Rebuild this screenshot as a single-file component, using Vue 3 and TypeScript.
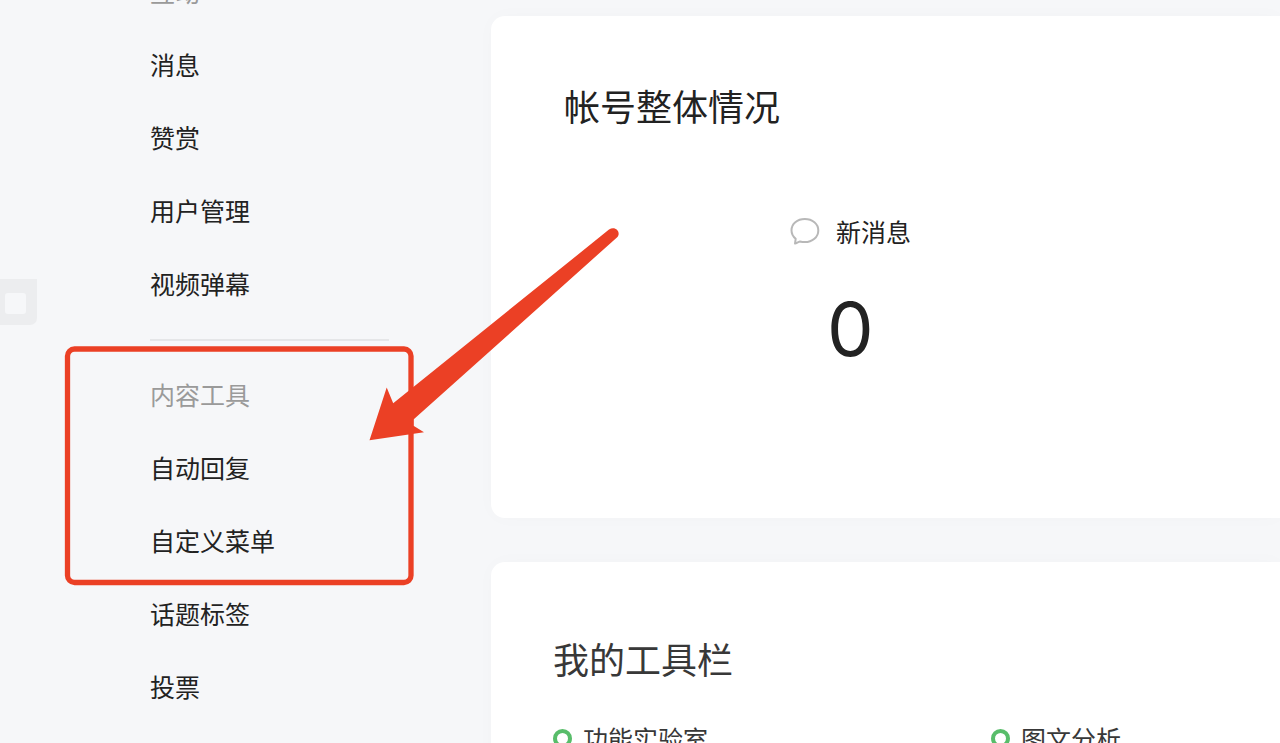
<script setup lang="ts">
interface MenuGroup {
  title: string
  items: string[]
}

const groups: MenuGroup[] = [
  { title: '互动', items: ['消息', '赞赏', '用户管理', '视频弹幕'] },
  { title: '内容工具', items: ['自动回复', '自定义菜单', '话题标签', '投票'] },
]

const tools: string[] = ['功能实验室', '图文分析']
</script>

<template>
  <div class="page">
    <aside class="sidebar">
      <nav class="menu">
        <section v-for="group in groups" :key="group.title" class="group">
          <h2 class="group-title">{{ group.title }}</h2>
          <ul class="list">
            <li v-for="item in group.items" :key="item">
              <a class="link" href="#">{{ item }}</a>
            </li>
          </ul>
        </section>
      </nav>
    </aside>

    <main class="content">
      <section class="card overview">
        <h1 class="heading">帐号整体情况</h1>
        <div class="stats">
          <div class="stat">
            <div class="stat-label">
              <svg class="bubble" width="30" height="28" viewBox="0 0 30 28" aria-hidden="true">
                <path
                  d="M14.800 2C7.200 2 1.500 6.900 1.500 13.200C1.500 16.800 3.200 19.700 5.700 21.700L5 26.600C6.600 26.300 8.200 24.800 10 24.500C11.500 24.900 13 25.100 14.800 25.100C22.400 25.100 28.300 20 28.300 13.400C28.300 6.900 22.400 2 14.800 2Z"
                  fill="none"
                  stroke="#b8b8b8"
                  stroke-width="2"
                  stroke-linejoin="round"
                />
              </svg>
              <span>新消息</span>
            </div>
            <div class="stat-value">0</div>
          </div>
        </div>
      </section>

      <section class="card toolbar">
        <h1 class="heading">我的工具栏</h1>
        <ul class="tools">
          <li v-for="tool in tools" :key="tool">
            <a class="tool" href="#"><span class="ring"></span>{{ tool }}</a>
          </li>
        </ul>
      </section>
    </main>

    <div class="handle" aria-hidden="true"><span></span></div>

    <svg class="marks" width="640" height="600" viewBox="0 0 640 600" aria-hidden="true">
      <rect x="67.500" y="349" width="343.500" height="233.500" rx="7" fill="none" stroke="#eb4025" stroke-width="5.300" />
      <path
        d="M369.500 440.300L386.700 387.500L393.200 403.200L609 229.600C615.500 225.500 621.500 232.500 617.200 237.200L413.500 419.500V425.700L424 432.200Z"
        fill="#eb4025"
      />
    </svg>
  </div>
</template>

<style>
body {
  margin: 0;
}
</style>

<style scoped>
.page {
  position: relative;
  display: flex;
  height: 100vh;
  overflow: hidden;
  background: #f6f7f9;
  color: #222;
  font-family: "Noto Sans CJK SC", sans-serif;
  font-size: 25px;
  line-height: 36px;
}

h1,
h2,
ul {
  margin: 0;
  padding: 0;
  font-weight: 400;
  list-style: none;
}

a {
  color: inherit;
  text-decoration: none;
}

.sidebar {
  flex: none;
  box-sizing: border-box;
  width: 491px;
  padding: 0 102px 0 150px;
}

.menu {
  margin-top: -45px;
}

.group + .group {
  margin-top: 19px;
  padding-top: 17px;
  border-top: 2px solid #e5e6e8;
}

.group-title,
.link {
  display: block;
  font-size: 25px;
  line-height: 73px;
}

.group-title {
  color: #9a9a9a;
}

.content {
  flex: 1;
  display: flex;
  flex-direction: column;
  gap: 44px;
  min-width: 0;
  padding-top: 16px;
}

.card {
  flex: none;
  box-sizing: border-box;
  background: #fff;
  border-radius: 14px 0 0 14px;
  box-shadow: 0 0 20px rgba(0, 0, 0, 0.02);
}

.overview {
  min-height: 502px;
  padding: 61px 0 61px 73px;
}

.heading {
  font-size: 36px;
  line-height: 56px;
}

.stats {
  display: flex;
  margin-top: 80px;
}

.stat {
  width: 80%;
  text-align: center;
}

.stat-label {
  display: flex;
  align-items: center;
  justify-content: center;
  gap: 16px;
}

.stat-value {
  margin-top: 35px;
  font-family: Inter, sans-serif;
  font-size: 74px;
  line-height: 90px;
}

.toolbar {
  padding: 68px 0 61px 62px;
  color: #383838;
}

.tools {
  display: grid;
  grid-template-columns: 438px 1fr;
  margin-top: 34px;
}

.tool {
  display: flex;
  align-items: center;
  gap: 11px;
}

.ring {
  box-sizing: border-box;
  width: 19px;
  height: 19px;
  border: 4px solid #58bd6a;
  border-radius: 50%;
}

.handle {
  position: absolute;
  top: 279px;
  left: 0;
  box-sizing: border-box;
  width: 37px;
  height: 46px;
  padding: 14px 5px;
  border-radius: 0 0 7px 0;
  background: #ecedef;
}

.handle span {
  display: block;
  width: 21px;
  height: 21px;
  border-radius: 3px;
  background: #f6f7f9;
}

.marks {
  position: absolute;
  top: 0;
  left: 0;
  pointer-events: none;
}
</style>
